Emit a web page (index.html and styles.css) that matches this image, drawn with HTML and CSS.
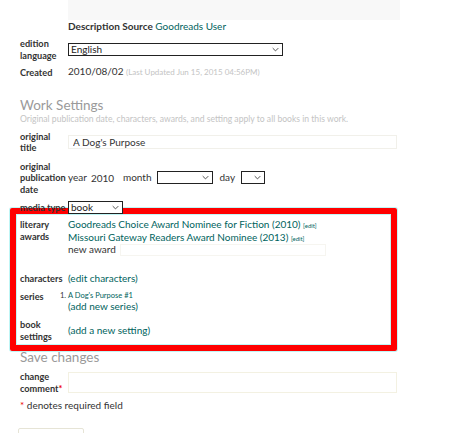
FILE: index.html
```html
<!DOCTYPE html>
<html lang="en">
<head>
    <meta charset="UTF-8">
    <title>Edit Book</title>
    <link rel="stylesheet" href="styles.css">
</head>
<body>
    <div class="page">
        <div class="row source-row">
            <div></div>
            <div>
                <div class="desc-box"></div>
                <p class="source"><b>Description Source</b> <a href="#">Goodreads User</a></p>
            </div>
        </div>

        <div class="row lang-row">
            <label class="label">edition language</label>
            <div class="field">
                <span class="select-wrap lang-select">
                    <select><option>English</option></select>
                    <svg class="chev" viewBox="0 0 10 6"><path d="M1 1l4 4 4-4" /></svg>
                </span>
            </div>
        </div>

        <div class="row created-row">
            <label class="label">Created</label>
            <div class="field">2010/08/02 <span class="muted">(Last Updated Jun 15, 2015 04:56PM)</span></div>
        </div>

        <h2 class="section-title">Work Settings</h2>
        <p class="section-note">Original publication date, characters, awards, and setting apply to all books in this work.</p>

        <div class="row title-row">
            <label class="label">original title</label>
            <div class="field"><input class="text-input" type="text" value="A Dog's Purpose"></div>
        </div>

        <div class="row date-row">
            <label class="label">original publication date</label>
            <div class="field date-fields">
                <span>year</span>
                <input class="year-input" type="text" value="2010">
                <span>month</span>
                <span class="select-wrap month-select">
                    <select><option></option></select>
                    <svg class="chev" viewBox="0 0 10 6"><path d="M1 1l4 4 4-4" /></svg>
                </span>
                <span>day</span>
                <span class="select-wrap day-select">
                    <select><option></option></select>
                    <svg class="chev" viewBox="0 0 10 6"><path d="M1 1l4 4 4-4" /></svg>
                </span>
            </div>
        </div>

        <div class="row media-row">
            <label class="label nowrap">media type</label>
            <div class="field">
                <span class="select-wrap media-select">
                    <select><option>book</option></select>
                    <svg class="chev" viewBox="0 0 10 6"><path d="M1 1l4 4 4-4" /></svg>
                </span>
            </div>
        </div>

        <div class="highlight">
            <div class="row awards-row">
                <label class="label">literary awards</label>
                <div class="field">
                    <div><a href="#">Goodreads Choice Award Nominee for Fiction (2010)</a> <a class="edit" href="#">[edit]</a></div>
                    <div><a href="#">Missouri Gateway Readers Award Nominee (2013)</a> <a class="edit" href="#">[edit]</a></div>
                    <div class="new-award">new award <input class="award-input" type="text"></div>
                </div>
            </div>

            <div class="row characters-row">
                <label class="label">characters</label>
                <div class="field"><a href="#">(edit characters)</a></div>
            </div>

            <div class="row series-row">
                <label class="label">series</label>
                <div class="field">
                    <ol class="series-list"><li><a href="#">A Dog's Purpose #1</a></li></ol>
                    <a href="#">(add new series)</a>
                </div>
            </div>

            <div class="row settings-row">
                <label class="label">book settings</label>
                <div class="field"><a href="#">(add a new setting)</a></div>
            </div>
        </div>

        <h2 class="section-title save-title">Save changes</h2>

        <div class="row comment-row">
            <label class="label">change comment<span class="req">*</span></label>
            <div class="field"><input class="comment-input" type="text"></div>
        </div>

        <p class="required-note"><span class="req">*</span> denotes required field</p>

        <button class="save-button" type="button"></button>
    </div>
</body>
</html>
```

FILE: styles.css
```css
* {
    margin: 0;
    padding: 0;
    box-sizing: border-box;
    font-family: 'Lato', 'Liberation Sans', sans-serif;
}

body {
    background: #fff;
    color: #333;
    font-size: 10px;
    line-height: 11.5px;
}

a {
    color: #00635d;
    text-decoration: none;
}

.page {
    width: 398px;
    padding-left: 20px;
}

.row {
    display: grid;
    grid-template-columns: 48px 1fr;
    align-items: center;
}

.label {
    font-size: 9.2px;
    font-weight: bold;
    color: #333;
}

.nowrap {
    white-space: nowrap;
}

.field {
    color: #333;
}

.desc-box {
    height: 20px;
    background: #f8f8f8;
    margin-right: -2px;
}

.source {
    line-height: 11px;
    margin-top: 1px;
}

.lang-row {
    margin-top: 6px;
}

.created-row {
    margin-top: 5px;
}

.muted {
    font-size: 8px;
    color: #c4c4c4;
}

.select-wrap {
    position: relative;
    display: inline-block;
    vertical-align: middle;
}

.select-wrap select {
    appearance: none;
    -webkit-appearance: none;
    display: block;
    width: 100%;
    height: 13px;
    border: 1px solid #222;
    border-radius: 0;
    background: #fff;
    font-size: 10px;
    line-height: 11px;
    padding: 0 0 0 2px;
    color: #222;
}

.chev {
    position: absolute;
    right: 4px;
    top: 4px;
    width: 7px;
    height: 5px;
    fill: none;
    stroke: #333;
    stroke-width: 1.2;
    pointer-events: none;
}

.lang-select {
    width: 215px;
}

.month-select {
    width: 56px;
}

.day-select {
    width: 24px;
}

.media-select {
    width: 55px;
}

.section-title {
    font-size: 13.5px;
    line-height: 16px;
    font-weight: normal;
    color: #9a9a9a;
    margin-top: 18px;
}

.section-note {
    font-size: 8.6px;
    line-height: 10px;
    color: #c4c4c4;
    margin-top: 1px;
}

.title-row {
    margin-top: 7px;
}

.text-input {
    display: block;
    width: 329px;
    height: 14px;
    border: 1px solid #f1f0ea;
    background: #fff;
    font-size: 10px;
    padding: 0 4px;
    color: #333;
}

.date-row {
    margin-top: 7px;
}

.date-fields {
    display: flex;
    align-items: center;
    gap: 6px;
}

.year-input {
    width: 26px;
    height: 13px;
    border: none;
    background: #fff;
    font-size: 10px;
    color: #333;
    padding: 0;
    margin-left: -2px;
}

.media-row {
    margin-top: 6px;
}

.highlight {
    margin: -6px 1px 0 -10px;
    border: 6px solid #ff0000;
    border-radius: 2px;
    padding: 5px 0 3px 4px;
    box-shadow: 0 0 0 1px #bff6f6, inset 0 0 0 1px #bff6f6;
}

.awards-row {
    align-items: start;
}

.edit {
    font-size: 6px;
}

.new-award {
    display: flex;
    align-items: center;
    gap: 4px;
}

.award-input {
    width: 206px;
    height: 12px;
    border: 1px solid #f6f5f0;
    background: #fff;
}

.characters-row {
    margin-top: 17px;
}

.series-row {
    margin-top: 5px;
    align-items: start;
}

.series-row .label {
    margin-top: 1px;
}

.series-list {
    font-size: 7.5px;
    line-height: 11px;
    padding-left: 0;
    list-style-position: outside;
}

.settings-row {
    margin-top: 7px;
}

.save-title {
    margin-top: -2px;
}

.comment-row {
    margin-top: 6px;
}

.comment-input {
    display: block;
    width: 329px;
    height: 21px;
    border: 1px solid #f3f1e2;
    background: #fff;
}

.req {
    color: #e00;
}

.required-note {
    margin-top: 6px;
}

.save-button {
    display: block;
    margin: 16px 0 0 -2px;
    width: 66px;
    height: 20px;
    border: 1px solid #e6e4d6;
    border-radius: 2px;
    background: #fff;
}
```
